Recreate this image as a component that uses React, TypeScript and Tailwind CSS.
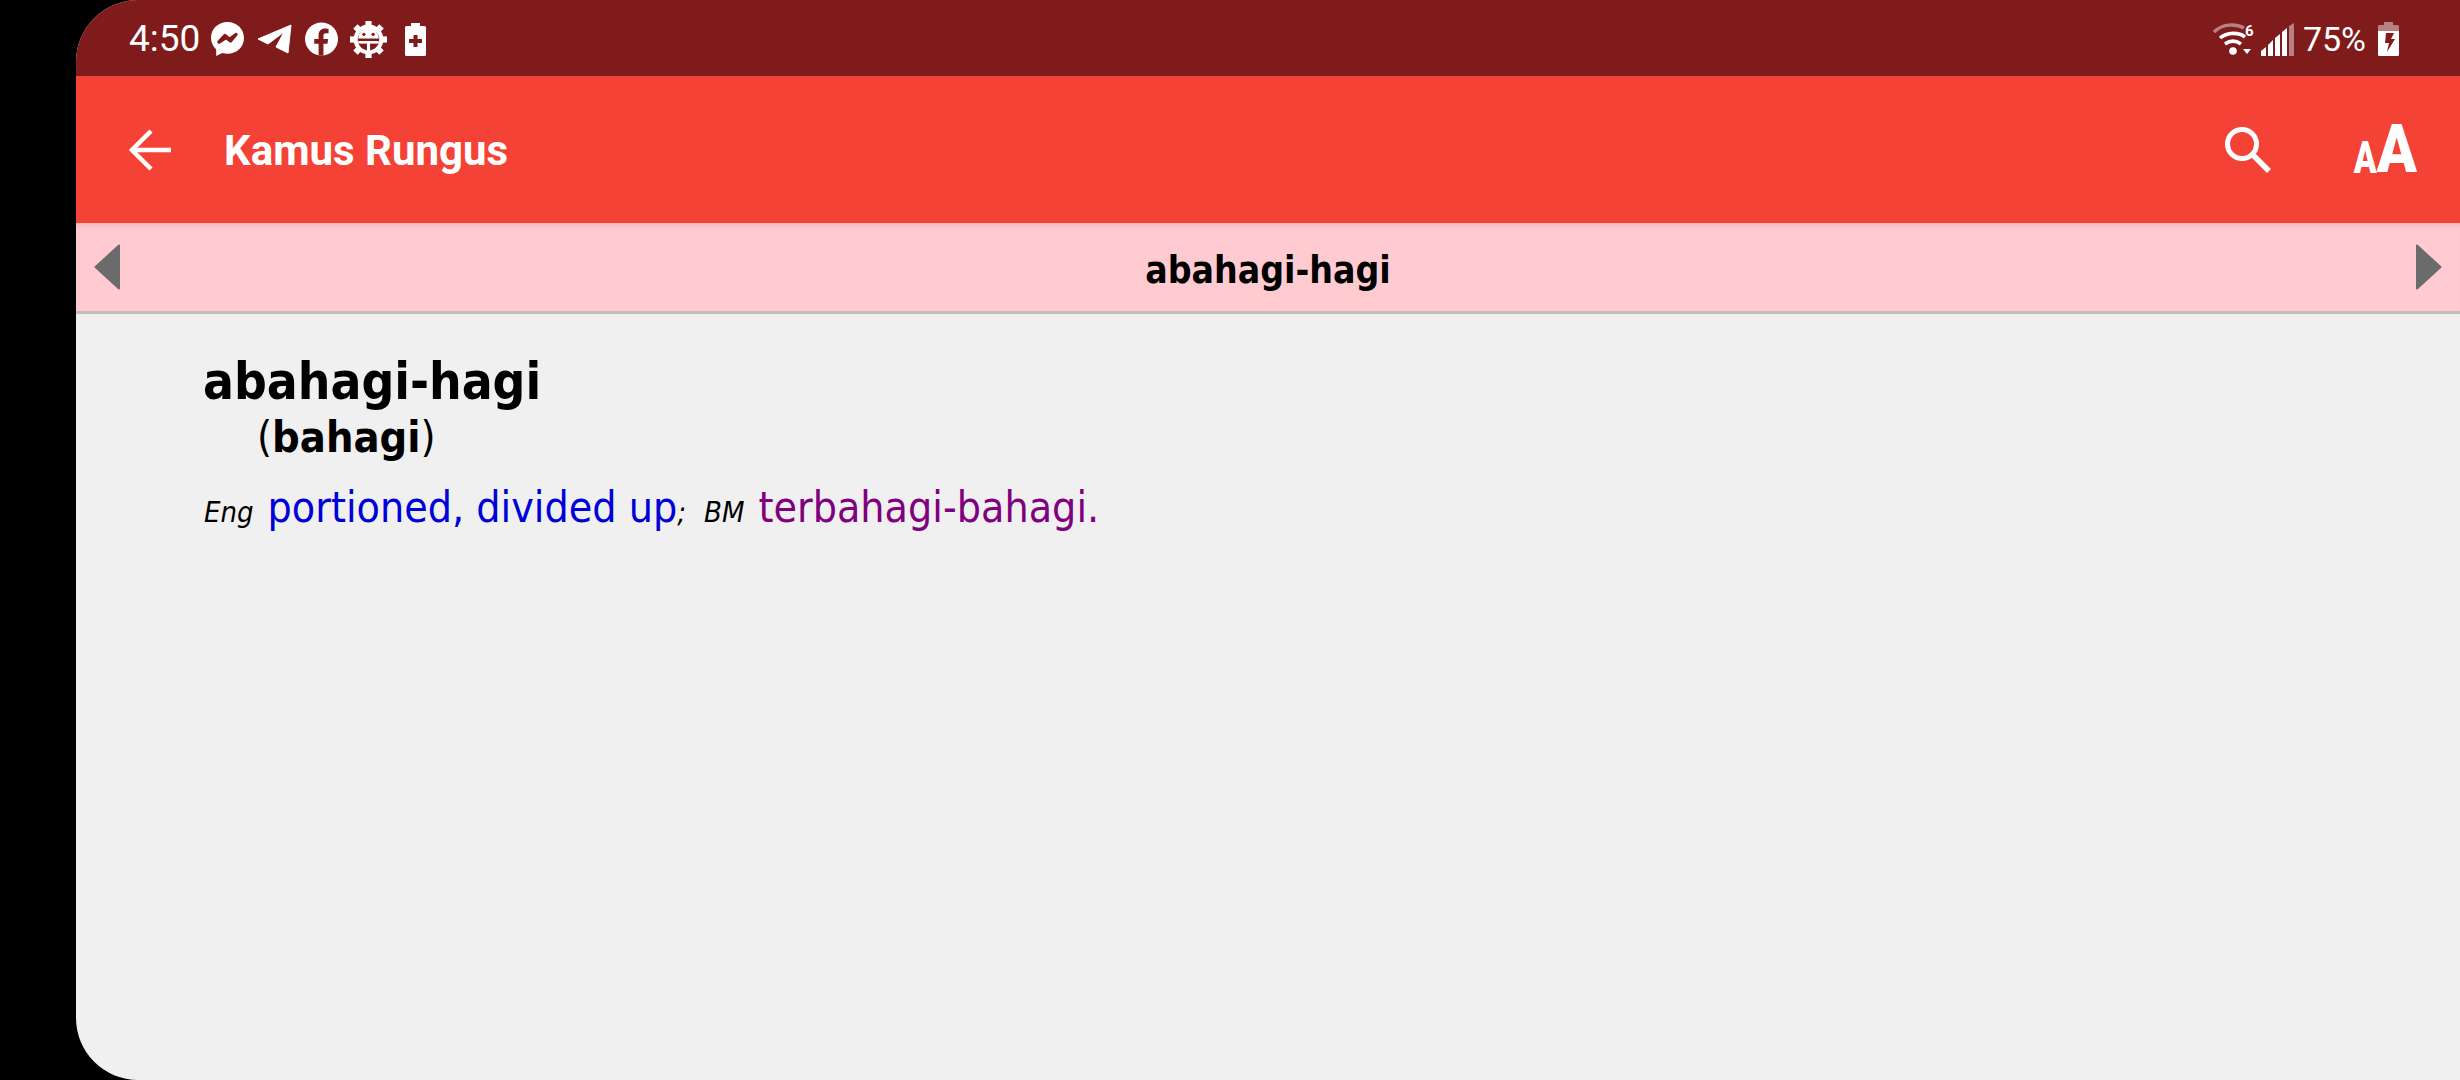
function Messenger() {
  return (
    <svg width="33" height="34" viewBox="0 0 33 34">
      <path fill="#fff" d="M16.500 0C7.300 0 0 6.800 0 15.800c0 4.700 2 8.800 5.200 11.600V34l6-3c1.700.5 3.400.7 5.300.7 9.200 0 16.500-6.800 16.500-15.800S25.700 0 16.500 0z" />
      <path fill="none" stroke="#7f1b1b" strokeWidth="3.400" strokeLinejoin="round" d="M8 20l6-6.500 4.500 3.800 6.500-4.800-5.500 6.500-4.500-3.500z" />
    </svg>
  );
}

function Telegram() {
  return (
    <svg width="35" height="30" viewBox="0 0 35 30">
      <path fill="#fff" stroke="#fff" strokeLinejoin="round" d="M34 1 31 29 19 23 27 8 11 20 1 15z" />
    </svg>
  );
}

function Facebook() {
  return (
    <svg width="33" height="34" viewBox="0 0 34 34">
      <circle cx="17" cy="17" r="17" fill="#fff" />
      <path fill="#7f1b1b" d="M14 34V22H9.500v-5H14v-3.800c0-4.400 2.700-6.900 6.700-6.900 1.500 0 3.200.3 3.600.4v4.300h-2.500c-2.200 0-2.800 1.300-2.800 2.700V17h4.900l-.8 5h-4.100v12z" />
    </svg>
  );
}

function Gear() {
  const teeth = [0, 45, 90, 135, 180, 225, 270, 315];
  return (
    <svg width="37" height="37" viewBox="0 0 36 36">
      {teeth.map((a) => (
        <rect key={a} x="15" y="0" width="6" height="7" fill="#fff" transform={`rotate(${a} 18 18)`} />
      ))}
      <circle cx="18" cy="18" r="12.500" fill="none" stroke="#fff" strokeWidth="4" />
      <path fill="#fff" d="M8 17a10 10 0 0 1 20 0z" />
      <circle cx="13.500" cy="13" r="1.600" fill="#7f1b1b" />
      <circle cx="22.500" cy="13" r="1.600" fill="#7f1b1b" />
      <rect x="8" y="19.500" width="20" height="2.500" fill="#fff" />
      <rect x="16.500" y="19.500" width="3" height="10" fill="#fff" />
    </svg>
  );
}

function BatteryPlus() {
  return (
    <svg width="21" height="33" viewBox="0 0 21 33">
      <path fill="#fff" d="M6 0h9v3h4.500A1.500 1.500 0 0 1 21 4.500v27a1.500 1.500 0 0 1-1.500 1.500h-18A1.500 1.500 0 0 1 0 31.500v-27A1.500 1.500 0 0 1 1.500 3H6z" />
      <path fill="#7f1b1b" d="M8.500 12h4v4H17v4h-4.500v4h-4v-4H4v-4h4.500z" />
    </svg>
  );
}

function Wifi() {
  return (
    <svg width="43" height="33" viewBox="0 0 43 33" className="overflow-visible">
      <path fill="none" stroke="#fff" strokeOpacity="0.45" strokeWidth="3.400" d="M1 9C9 1 22 0 31 5" />
      <path fill="none" stroke="#fff" strokeWidth="3.600" d="M7 15c7-6 19-6 25-1" />
      <path fill="none" stroke="#fff" strokeWidth="3.600" d="M12 21c5-3.500 11-3.500 16 0" />
      <circle cx="20" cy="28" r="3.800" fill="#fff" />
      <path fill="#fff" d="M30 26h8l-4 5z" />
      <text x="32" y="13" fill="#fff" fontSize="15" fontWeight="700" fontFamily="Roboto, sans-serif">6</text>
    </svg>
  );
}

function Signal() {
  return (
    <svg width="33" height="33" viewBox="0 0 33 33">
      <path fill="#fff" d="M0 28l5-4v9H0zM7 22l5-5v16H7zM14 15l5-4v22h-5zM21 9l5-4v28h-5z" />
      <path fill="#fff" fillOpacity="0.45" d="M28 3l5-3v33h-5z" />
    </svg>
  );
}

function BatteryBolt() {
  return (
    <svg width="21" height="34" viewBox="0 0 21 34">
      <path fill="#fff" fillOpacity="0.45" d="M6 0h9v3h4.500A1.500 1.500 0 0 1 21 4.500V9H0V4.500A1.500 1.500 0 0 1 1.500 3H6z" />
      <path fill="#fff" d="M0 9h21v23.500a1.500 1.500 0 0 1-1.500 1.500h-18A1.500 1.500 0 0 1 0 32.500z" />
      <path fill="#7f1b1b" d="M8 11h8l-3 6h4L9 30l2-9H7z" />
    </svg>
  );
}

function BackArrow() {
  return (
    <svg width="42" height="42" viewBox="0 0 42 42">
      <path fill="none" stroke="#fff" strokeWidth="4.500" d="M42 21H4M22 2 3 21l19 19" />
    </svg>
  );
}

function SearchGlass() {
  return (
    <svg width="46" height="46" viewBox="0 0 46 46">
      <circle cx="17" cy="17" r="14.500" fill="none" stroke="#fff" strokeWidth="5" />
      <path stroke="#fff" strokeWidth="5.500" d="M27 27l17 17" />
    </svg>
  );
}

function TextSize() {
  return (
    <div className="flex items-end font-['Roboto',sans-serif] font-black text-white">
      <span className="text-[45px] leading-[33px] -mr-[5px] scale-x-[0.75] origin-right">A</span>
      <span className="text-[66px] leading-[48px] scale-x-[0.9] origin-right">A</span>
    </div>
  );
}

function Triangle({ dir }: { dir: "left" | "right" }) {
  return (
    <svg width="26" height="46" viewBox="0 0 26 46">
      <path
        fill="#6b6b6b"
        stroke="#6b6b6b"
        strokeWidth="2"
        strokeLinejoin="round"
        d={dir === "left" ? "M25 1.500V44.500L1.500 23z" : "M1 1.500V44.500L24.500 23z"}
      />
    </svg>
  );
}

export default function App() {
  return (
    <div className="min-h-screen bg-black pl-[76px]">
      <div className="h-[1080px] flex flex-col overflow-hidden rounded-l-[62px] bg-[#f0f0f0]">
        <div className="h-[76px] shrink-0 bg-[#7f1b1b] flex items-center justify-between pl-[53px] pr-[61px] pt-[2px] text-white font-['Roboto',sans-serif] text-[37px]">
          <div className="flex items-center">
            <span>4:50</span>
            <div className="ml-[11px]"><Messenger /></div>
            <div className="ml-[13px]"><Telegram /></div>
            <div className="ml-[13px]"><Facebook /></div>
            <div className="ml-[12px]"><Gear /></div>
            <div className="ml-[18px]"><BatteryPlus /></div>
          </div>
          <div className="flex items-center">
            <Wifi />
            <div className="ml-[5px]"><Signal /></div>
            <span className="ml-[9px] text-[34px]">75%</span>
            <div className="ml-[12px]"><BatteryBolt /></div>
          </div>
        </div>

        <div className="h-[147px] shrink-0 bg-[#f44336] flex items-center pl-[53px] pr-[43px] text-white">
          <BackArrow />
          <span className="ml-[53px] pt-[2px] font-['Roboto',sans-serif] font-bold text-[42px]">Kamus Rungus</span>
          <div className="ml-auto flex items-center gap-[75px]">
            <SearchGlass />
            <TextSize />
          </div>
        </div>

        <div className="h-[91px] shrink-0 bg-[#ffcbd0] border-b-[3px] border-[#bfbfbf] flex items-center justify-between px-[18px] shadow-[inset_0_5px_5px_-3px_rgba(0,0,0,0.1)]">
          <Triangle dir="left" />
          <span className="font-['DejaVu_Sans_Condensed','DejaVu_Sans',sans-serif] [font-stretch:condensed] font-bold text-[37px] pt-[7px] text-black">abahagi-hagi</span>
          <Triangle dir="right" />
        </div>

        <div className="flex-1 pl-[127px] pt-[39px] font-['DejaVu_Sans_Condensed','DejaVu_Sans',sans-serif] [font-stretch:condensed] text-black">
          <div className="font-bold text-[51px] leading-[58px]">abahagi-hagi</div>
          <div className="pl-[54px] text-[43px] leading-[52px]">
            (<b>bahagi</b>)
          </div>
          <div className="mt-[19px] pl-[1px] flex items-baseline text-[29px] italic leading-[52px]">
            <span>Eng</span>
            <span className="ml-[14px] not-italic text-[42.500px] text-[#0000d8]">portioned, divided up</span>
            <span>;</span>
            <span className="ml-[18px]">BM</span>
            <span className="ml-[14px] not-italic text-[42.500px] text-[#800080]">terbahagi-bahagi.</span>
          </div>
        </div>
      </div>
    </div>
  );
}
